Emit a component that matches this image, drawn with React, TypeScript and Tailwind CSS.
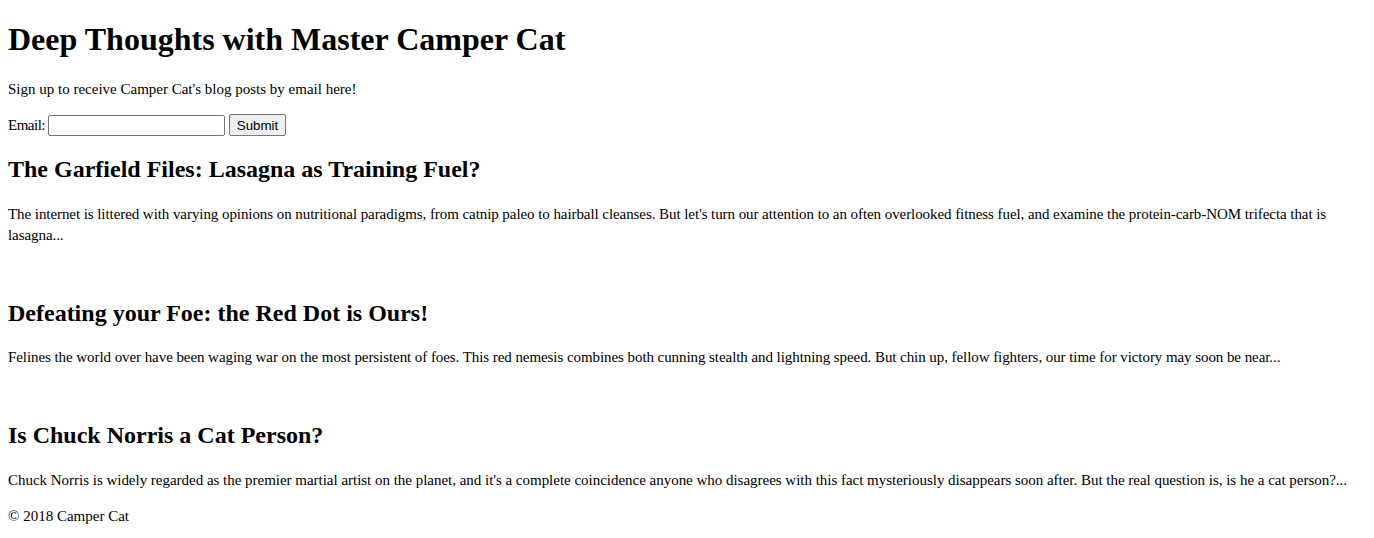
import React from "react";

export default function App() {
  return (
    <div className="px-2 pb-2 text-black bg-white font-['Liberation_Serif','Times_New_Roman',serif] text-[15px] leading-[21px]">
      <header>
        <h1 className="text-[32px] font-bold my-[21.44px] leading-[37px]">
          Deep Thoughts with Master Camper Cat
        </h1>
      </header>
      <section>
        <form onSubmit={(e) => e.preventDefault()}>
          <p className="my-4 leading-[18.4px]">Sign up to receive Camper Cat's blog posts by email here!</p>
          <div className="flex items-center h-[22px]">
            <label htmlFor="email" className="mr-[3px] tracking-[-0.5px]">Email:</label>
            <input
              type="text"
              id="email"
              name="email"
              className="w-[177px] h-[21px] border border-[#767676] rounded-[2px] px-[2px] py-[1px] bg-white text-[13.33px] font-['Liberation_Sans',Arial,sans-serif]"
            />
            <input
              type="submit"
              name="submit"
              value="Submit"
              className="ml-[4px] w-[57px] h-[22px] border border-[#767676] rounded-[2px] bg-[#efefef] text-[13.33px] text-black font-['Liberation_Sans',Arial,sans-serif]"
            />
          </div>
        </form>
      </section>
      <article>
        <h2 className="text-[24px] font-bold my-[19.92px] leading-[27.6px]">
          The Garfield Files: Lasagna as Training Fuel?
        </h2>
        <p className="my-4 tracking-[-0.07px]">
          The internet is littered with varying opinions on nutritional paradigms, from catnip paleo to hairball cleanses. But let's turn our attention to an often overlooked fitness fuel, and examine the protein-carb-NOM trifecta that is lasagna...
        </p>
      </article>
      <div className="h-[18px]" />
      <article>
        <h2 className="text-[24px] font-bold my-[19.92px] leading-[27.6px]">
          Defeating your Foe: the Red Dot is Ours!
        </h2>
        <p className="my-4 tracking-[-0.07px]">
          Felines the world over have been waging war on the most persistent of foes. This red nemesis combines both cunning stealth and lightning speed. But chin up, fellow fighters, our time for victory may soon be near...
        </p>
      </article>
      <div className="h-[18px]" />
      <article>
        <h2 className="text-[24px] font-bold my-[19.92px] leading-[27.6px]">
          Is Chuck Norris a Cat Person?
        </h2>
        <p className="my-4 tracking-[-0.02px]">
          Chuck Norris is widely regarded as the premier martial artist on the planet, and it's a complete coincidence anyone who disagrees with this fact mysteriously disappears soon after. But the real question is, is he a cat person?...
        </p>
      </article>
      <footer className="leading-[18.4px]">&copy; 2018 Camper Cat</footer>
    </div>
  );
}
